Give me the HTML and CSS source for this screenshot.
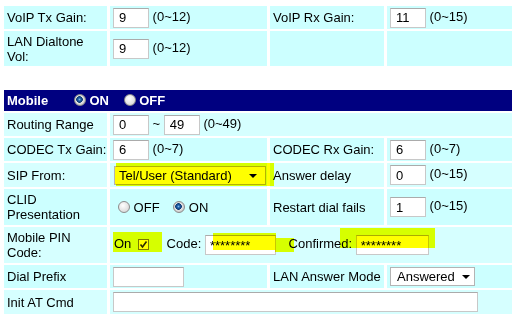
FILE: index.html
```html
<!DOCTYPE html>
<html lang="en">
<head>
    <meta charset="UTF-8">
    <title>Mobile Settings</title>
    <link rel="stylesheet" href="styles.css">
</head>
<body>
<div class="page">
    <table class="grid">
        <colgroup><col class="c1"><col class="c2"><col class="c3"><col class="c4"></colgroup>
        <tr class="row23">
            <td class="lbl">VoIP Tx Gain:</td>
            <td class="val"><input class="num" value="9"> (0~12)</td>
            <td class="lbl">VoIP Rx Gain:</td>
            <td class="val"><input class="num" value="11"> (0~15)</td>
        </tr>
        <tr class="row35">
            <td class="lbl">LAN Dialtone Vol:</td>
            <td class="val"><input class="num" value="9"> (0~12)</td>
            <td></td>
            <td></td>
        </tr>
    </table>

    <table class="grid mobile">
        <colgroup><col class="c1"><col class="c2"><col class="c3"><col class="c4"></colgroup>
        <tr>
            <td colspan="4" class="head">
                <b class="title">Mobile</b>
                <span class="radio on"></span> <b>ON</b>
                <span class="radio gap"></span> <b>OFF</b>
            </td>
        </tr>
        <tr class="row23 light">
            <td class="lbl">Routing Range</td>
            <td colspan="3" class="val"><input class="num" value="0"> ~ <input class="num" value="49"> (0~49)</td>
        </tr>
        <tr class="row23">
            <td class="lbl">CODEC Tx Gain:</td>
            <td class="val"><input class="num" value="6"> (0~7)</td>
            <td class="lbl">CODEC Rx Gain:</td>
            <td class="val"><input class="num" value="6"> (0~7)</td>
        </tr>
        <tr class="row24 light">
            <td class="lbl">SIP From:</td>
            <td class="val">
                <span class="dropdown sip"><select><option>Tel/User (Standard)</option></select></span>
            </td>
            <td class="lbl">Answer delay</td>
            <td class="val"><input class="num" value="0"> (0~15)</td>
        </tr>
        <tr class="row36">
            <td class="lbl">CLID Presentation</td>
            <td class="val">
                <span class="radio opt"></span> OFF
                <span class="radio on opt gap2"></span> ON
            </td>
            <td class="lbl">Restart dial fails</td>
            <td class="val"><input class="num" value="1"> (0~15)</td>
        </tr>
        <tr class="row36 light">
            <td class="lbl">Mobile PIN Code:</td>
            <td colspan="3" class="val pin">
                <span class="on-lbl">On</span>
                <span class="check"><svg width="9" height="9" viewBox="0 0 9 9"><path d="M1.5 4.5 L3.5 7 L7.5 1.5" fill="none" stroke="#2b2b00" stroke-width="1.6"/></svg></span>
                <span class="code-lbl">Code:</span>
                <input class="pw" value="********">
                <span class="conf-lbl">Confirmed:</span>
                <input class="pw conf" value="********">
            </td>
        </tr>
        <tr class="row23">
            <td class="lbl">Dial Prefix</td>
            <td class="val"><input class="mid" value=""></td>
            <td class="lbl">LAN Answer Mode</td>
            <td class="val">
                <span class="dropdown mode"><select><option>Answered</option></select></span>
            </td>
        </tr>
        <tr class="row24 light">
            <td class="lbl">Init AT Cmd</td>
            <td colspan="3" class="val"><input class="long" value=""></td>
        </tr>
    </table>

    <!-- highlighter marks drawn over the screenshot -->
    <span class="mark" style="left:116px;top:163px;width:158px;height:23px"></span>
    <span class="mark" style="left:113px;top:232px;width:49px;height:20px"></span>
    <span class="mark" style="left:213px;top:233px;width:63px;height:17px"></span>
    <span class="mark" style="left:275px;top:238px;width:19px;height:14px"></span>
    <span class="mark" style="left:340px;top:228px;width:95px;height:20px"></span>
</div>
</body>
</html>
```

FILE: styles.css
```css
body {
    margin: 0;
    font-family: "Liberation Sans", Arial, sans-serif;
    font-size: 13px;
    color: #000;
    background: #fff;
}
.page {
    position: relative;
    padding-top: 4px;
}
.grid {
    table-layout: fixed;
    width: 514px;
    margin-left: 1px;
    border-collapse: separate;
    border-spacing: 3px 2px;
}
.grid .c1 { width: 103px; }
.grid .c2 { width: 157px; }
.grid .c3 { width: 114px; }
.grid .c4 { width: 125px; }
.grid td {
    background: #ccffff;
    padding: 0 0 0 3px;
    vertical-align: middle;
    line-height: 15px;
}
.grid .light td {
    background: #d6ffff;
}
.row23 td { height: 23px; }
.row24 td { height: 24px; }
.row35 td { height: 35px; }
.row36 td { height: 36px; }
.mobile {
    margin-top: 20px;
}
.grid td.head {
    background: #000080;
    color: #fff;
    height: 21px;
    padding-left: 3px;
}
.head .title {
    margin-right: 22px;
}
.head .gap {
    margin-left: 11px;
}
.grid td.val {
    padding-left: 3px;
}
input {
    box-sizing: border-box;
    height: 20px;
    margin: 0;
    border: 1px solid #c8c8c8;
    border-top-color: #ababab;
    background: #fff;
    font-family: "Liberation Sans", Arial, sans-serif;
    font-size: 13px;
    color: #000;
    padding: 0 0 0 5px;
    vertical-align: middle;
}
.num { width: 36px; }
.mid { width: 71px; }
.long { width: 365px; }
.pw {
    width: 71px;
    padding-left: 4px;
}
.pw.conf { width: 73px; }
.radio {
    display: inline-block;
    box-sizing: border-box;
    width: 12px;
    height: 12px;
    border-radius: 50%;
    border: 1px solid #8c8c8c;
    background: radial-gradient(circle at 40% 35%, #ffffff, #cfcfcf);
    vertical-align: -1px;
}
.radio.on {
    background: radial-gradient(circle at 45% 45%, #7fb6e6 0, #1d5da8 1.5px, #0e3a73 3px, #e4e4e4 3.6px, #c4c4c4 6px);
}
.radio.opt {
    margin-left: 5px;
}
.radio.gap2 {
    margin-left: 10px;
}
.dropdown {
    position: relative;
    display: inline-block;
    vertical-align: middle;
}
.dropdown select {
    appearance: none;
    -webkit-appearance: none;
    box-sizing: border-box;
    height: 19px;
    margin: 0;
    border: 1px solid #b4b4b4;
    border-radius: 0;
    background: #fff;
    font-family: "Liberation Sans", Arial, sans-serif;
    font-size: 13px;
    color: #000;
    padding: 0 0 0 4px;
}
.dropdown::after {
    content: "";
    position: absolute;
    top: 8px;
    border-left: 4px solid transparent;
    border-right: 4px solid transparent;
    border-top: 4px solid #000;
}
.dropdown.sip {
    margin-left: 1px;
}
.dropdown.sip select {
    width: 152px;
    background: #ffff00;
}
.dropdown.sip::after {
    right: 9px;
}
.dropdown.mode select {
    width: 85px;
    padding-left: 6px;
}
.dropdown.mode::after {
    right: 5px;
}
.pin .on-lbl {
    margin-left: 1px;
}
.check {
    display: inline-block;
    box-sizing: border-box;
    width: 11px;
    height: 11px;
    border: 1px solid #7a7a7a;
    background: #fff;
    margin-left: 3px;
    vertical-align: -1px;
    line-height: 0;
}
.code-lbl {
    margin-left: 14px;
}
.conf-lbl {
    margin-left: 9px;
}
.mark {
    position: absolute;
    background: #ffff00;
    mix-blend-mode: multiply;
    pointer-events: none;
}
```
